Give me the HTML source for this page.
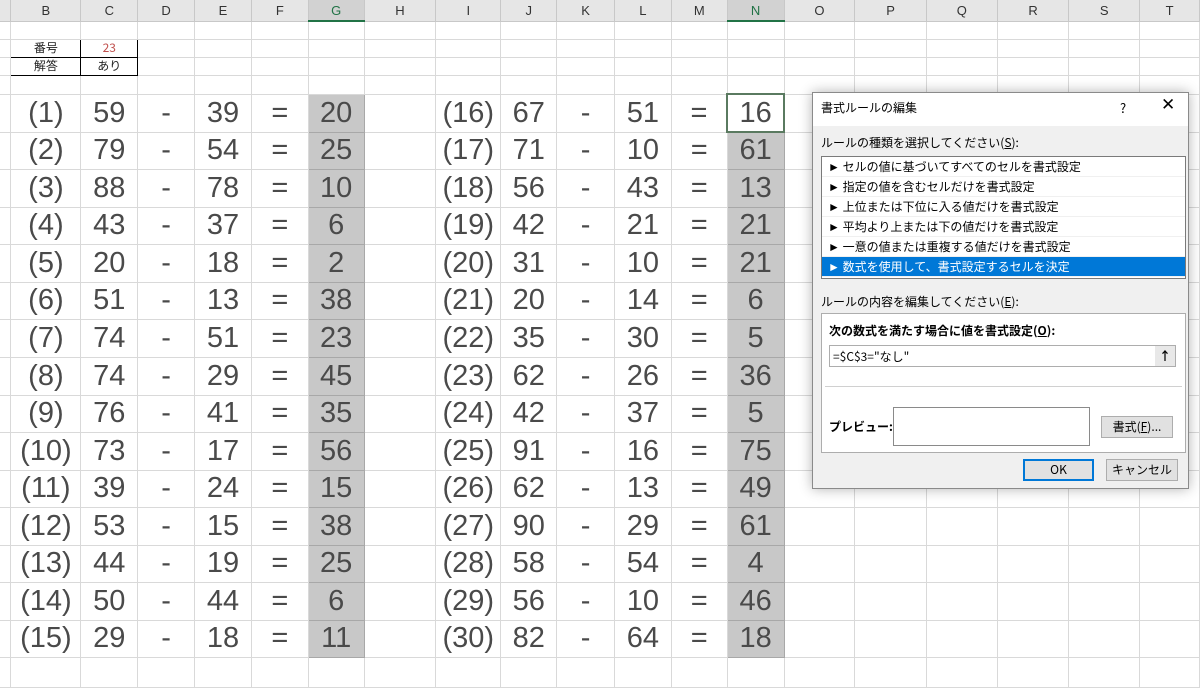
<!DOCTYPE html>
<html><head><meta charset="utf-8"><style>
*{margin:0;padding:0;box-sizing:border-box}
body{width:1200px;height:684px;overflow:hidden;background:#fff;position:relative;font-family:"Liberation Sans","Noto Sans CJK JP",sans-serif}
table{border-collapse:collapse;table-layout:fixed;position:absolute;left:0;top:0}
td{border:1px solid #d9d9d9;text-align:center;padding:0;overflow:hidden;white-space:nowrap;color:#222;line-height:1}
tr.h td{background:#e6e6e6;height:21px;font-size:13px;color:#333;border-color:#c8c8c8;border-top:none}
tr.h td.sel{background:#d2d2d2;border-bottom:2px solid #217346;color:#217346}
tr.s td{height:18px;max-height:18px}
tr.b td{font-size:29px;color:#4a4a4a;font-family:"Liberation Sans","Noto Sans CJK JP",sans-serif}
tr.b td.g{background:#c8c8c8;border-color:#a8a8a8}
td.bx{border:1px solid #000;font-size:12px;line-height:14px;font-family:"Noto Sans CJK JP",sans-serif}
td.a{border-left:none}
.dlg{position:absolute;left:812px;top:92px;width:377px;height:397px;background:#f0f0f0;border:1px solid #8a8a8a;box-shadow:0 0 12px rgba(0,0,0,.3);font-family:"Noto Sans CJK JP",sans-serif;font-size:12px;color:#000}
.ab{position:absolute;white-space:nowrap}
.lst{position:absolute;left:8px;top:63px;width:365px;height:123px;background:#fff;border:1px solid #7a7a7a}
.it{height:20px;line-height:20px;padding-left:6px;border-bottom:1px solid #f0f0f0}
.it.on{background:#0078d7;color:#fff}
.btn{position:absolute;background:#e1e1e1;border:1px solid #adadad;text-align:center;line-height:20px}
</style></head><body>
<table>
<colgroup><col style="width:11px"><col style="width:70px"><col style="width:57px"><col style="width:57px"><col style="width:57px"><col style="width:57px"><col style="width:56px"><col style="width:72px"><col style="width:65px"><col style="width:56px"><col style="width:58px"><col style="width:57px"><col style="width:56px"><col style="width:57px"><col style="width:71px"><col style="width:72px"><col style="width:71px"><col style="width:72px"><col style="width:71px"><col style="width:60px"></colgroup>
<tr class="h"><td class="a"></td><td>B</td><td>C</td><td>D</td><td>E</td><td>F</td><td class="sel">G</td><td>H</td><td>I</td><td>J</td><td>K</td><td>L</td><td>M</td><td class="sel">N</td><td>O</td><td>P</td><td>Q</td><td>R</td><td>S</td><td>T</td></tr>
<tr class="s"><td class="a"></td><td></td><td></td><td></td><td></td><td></td><td></td><td></td><td></td><td></td><td></td><td></td><td></td><td></td><td></td><td></td><td></td><td></td><td></td><td></td></tr>
<tr class="s"><td class="a"></td><td class="bx">番号</td><td class="bx" style="color:#c0504d">23</td><td></td><td></td><td></td><td></td><td></td><td></td><td></td><td></td><td></td><td></td><td></td><td></td><td></td><td></td><td></td><td></td><td></td></tr>
<tr class="s"><td class="a"></td><td class="bx">解答</td><td class="bx">あり</td><td></td><td></td><td></td><td></td><td></td><td></td><td></td><td></td><td></td><td></td><td></td><td></td><td></td><td></td><td></td><td></td><td></td></tr>
<tr class="s"><td class="a" style="height:19px"></td><td></td><td></td><td></td><td></td><td></td><td></td><td></td><td></td><td></td><td></td><td></td><td></td><td></td><td></td><td></td><td></td><td></td><td></td><td></td></tr>
<tr class="b" style="height:38px"><td class="a"></td><td>(1)</td><td>59</td><td>-</td><td>39</td><td>=</td><td class="g">20</td><td></td><td>(16)</td><td>67</td><td>-</td><td>51</td><td>=</td><td style="border:2px solid #5a7a60">16</td><td></td><td></td><td></td><td></td><td></td><td></td></tr>
<tr class="b" style="height:37px"><td class="a"></td><td>(2)</td><td>79</td><td>-</td><td>54</td><td>=</td><td class="g">25</td><td></td><td>(17)</td><td>71</td><td>-</td><td>10</td><td>=</td><td class="g">61</td><td></td><td></td><td></td><td></td><td></td><td></td></tr>
<tr class="b" style="height:38px"><td class="a"></td><td>(3)</td><td>88</td><td>-</td><td>78</td><td>=</td><td class="g">10</td><td></td><td>(18)</td><td>56</td><td>-</td><td>43</td><td>=</td><td class="g">13</td><td></td><td></td><td></td><td></td><td></td><td></td></tr>
<tr class="b" style="height:37px"><td class="a"></td><td>(4)</td><td>43</td><td>-</td><td>37</td><td>=</td><td class="g">6</td><td></td><td>(19)</td><td>42</td><td>-</td><td>21</td><td>=</td><td class="g">21</td><td></td><td></td><td></td><td></td><td></td><td></td></tr>
<tr class="b" style="height:38px"><td class="a"></td><td>(5)</td><td>20</td><td>-</td><td>18</td><td>=</td><td class="g">2</td><td></td><td>(20)</td><td>31</td><td>-</td><td>10</td><td>=</td><td class="g">21</td><td></td><td></td><td></td><td></td><td></td><td></td></tr>
<tr class="b" style="height:37px"><td class="a"></td><td>(6)</td><td>51</td><td>-</td><td>13</td><td>=</td><td class="g">38</td><td></td><td>(21)</td><td>20</td><td>-</td><td>14</td><td>=</td><td class="g">6</td><td></td><td></td><td></td><td></td><td></td><td></td></tr>
<tr class="b" style="height:38px"><td class="a"></td><td>(7)</td><td>74</td><td>-</td><td>51</td><td>=</td><td class="g">23</td><td></td><td>(22)</td><td>35</td><td>-</td><td>30</td><td>=</td><td class="g">5</td><td></td><td></td><td></td><td></td><td></td><td></td></tr>
<tr class="b" style="height:38px"><td class="a"></td><td>(8)</td><td>74</td><td>-</td><td>29</td><td>=</td><td class="g">45</td><td></td><td>(23)</td><td>62</td><td>-</td><td>26</td><td>=</td><td class="g">36</td><td></td><td></td><td></td><td></td><td></td><td></td></tr>
<tr class="b" style="height:37px"><td class="a"></td><td>(9)</td><td>76</td><td>-</td><td>41</td><td>=</td><td class="g">35</td><td></td><td>(24)</td><td>42</td><td>-</td><td>37</td><td>=</td><td class="g">5</td><td></td><td></td><td></td><td></td><td></td><td></td></tr>
<tr class="b" style="height:38px"><td class="a"></td><td>(10)</td><td>73</td><td>-</td><td>17</td><td>=</td><td class="g">56</td><td></td><td>(25)</td><td>91</td><td>-</td><td>16</td><td>=</td><td class="g">75</td><td></td><td></td><td></td><td></td><td></td><td></td></tr>
<tr class="b" style="height:37px"><td class="a"></td><td>(11)</td><td>39</td><td>-</td><td>24</td><td>=</td><td class="g">15</td><td></td><td>(26)</td><td>62</td><td>-</td><td>13</td><td>=</td><td class="g">49</td><td></td><td></td><td></td><td></td><td></td><td></td></tr>
<tr class="b" style="height:38px"><td class="a"></td><td>(12)</td><td>53</td><td>-</td><td>15</td><td>=</td><td class="g">38</td><td></td><td>(27)</td><td>90</td><td>-</td><td>29</td><td>=</td><td class="g">61</td><td></td><td></td><td></td><td></td><td></td><td></td></tr>
<tr class="b" style="height:37px"><td class="a"></td><td>(13)</td><td>44</td><td>-</td><td>19</td><td>=</td><td class="g">25</td><td></td><td>(28)</td><td>58</td><td>-</td><td>54</td><td>=</td><td class="g">4</td><td></td><td></td><td></td><td></td><td></td><td></td></tr>
<tr class="b" style="height:38px"><td class="a"></td><td>(14)</td><td>50</td><td>-</td><td>44</td><td>=</td><td class="g">6</td><td></td><td>(29)</td><td>56</td><td>-</td><td>10</td><td>=</td><td class="g">46</td><td></td><td></td><td></td><td></td><td></td><td></td></tr>
<tr class="b" style="height:37px"><td class="a"></td><td>(15)</td><td>29</td><td>-</td><td>18</td><td>=</td><td class="g">11</td><td></td><td>(30)</td><td>82</td><td>-</td><td>64</td><td>=</td><td class="g">18</td><td></td><td></td><td></td><td></td><td></td><td></td></tr>
<tr style="height:30px"><td class="a"></td><td></td><td></td><td></td><td></td><td></td><td></td><td></td><td></td><td></td><td></td><td></td><td></td><td></td><td></td><td></td><td></td><td></td><td></td><td></td></tr>
</table>

<div class="dlg">
 <div class="ab" style="left:0;top:0;width:375px;height:33px;background:#fff"></div>
 <div class="ab" style="left:8px;top:6px">書式ルールの編集</div>
 <div class="ab" style="left:307px;top:5px;font-size:13px">?</div>
 <div class="ab" style="left:348px;top:2px;font-size:17px;font-family:'DejaVu Sans',sans-serif">✕</div>
 <div class="ab" style="left:8px;top:41px">ルールの種類を選択してください(<u>S</u>):</div>
 <div class="lst">
  <div class="it">► セルの値に基づいてすべてのセルを書式設定</div>
  <div class="it">► 指定の値を含むセルだけを書式設定</div>
  <div class="it">► 上位または下位に入る値だけを書式設定</div>
  <div class="it">► 平均より上または下の値だけを書式設定</div>
  <div class="it">► 一意の値または重複する値だけを書式設定</div>
  <div class="it on">► 数式を使用して、書式設定するセルを決定</div>
 </div>
 <div class="ab" style="left:8px;top:200px">ルールの内容を編集してください(<u>E</u>):</div>
 <div class="ab" style="left:8px;top:220px;width:365px;height:140px;background:#fff;border:1px solid #adadad"></div>
 <div class="ab" style="left:16px;top:229px;font-weight:bold">次の数式を満たす場合に値を書式設定(<u>O</u>):</div>
 <div class="ab" style="left:16px;top:252px;width:347px;height:22px;border:1px solid #adadad;background:#fff"></div>
 <div class="ab" style="left:20px;top:255px">=$C$3="なし"</div>
 <div class="ab" style="left:342px;top:253px;width:20px;height:20px;background:#e8e8e8;text-align:center;font-weight:bold;line-height:20px">↑</div>
 <div class="ab" style="left:12px;top:293px;width:357px;height:1px;background:#d0d0d0"></div>
 <div class="ab" style="left:16px;top:325px;font-weight:bold">プレビュー:</div>
 <div class="ab" style="left:80px;top:314px;width:197px;height:39px;border:1px solid #8a8a8a;background:#fff"></div>
 <div class="btn" style="left:288px;top:323px;width:72px;height:22px">書式(<u>F</u>)...</div>
 <div class="btn" style="left:210px;top:366px;width:71px;height:22px;border:2px solid #0078d7;line-height:18px">OK</div>
 <div class="btn" style="left:293px;top:366px;width:72px;height:22px">キャンセル</div>
</div>
</body></html>
